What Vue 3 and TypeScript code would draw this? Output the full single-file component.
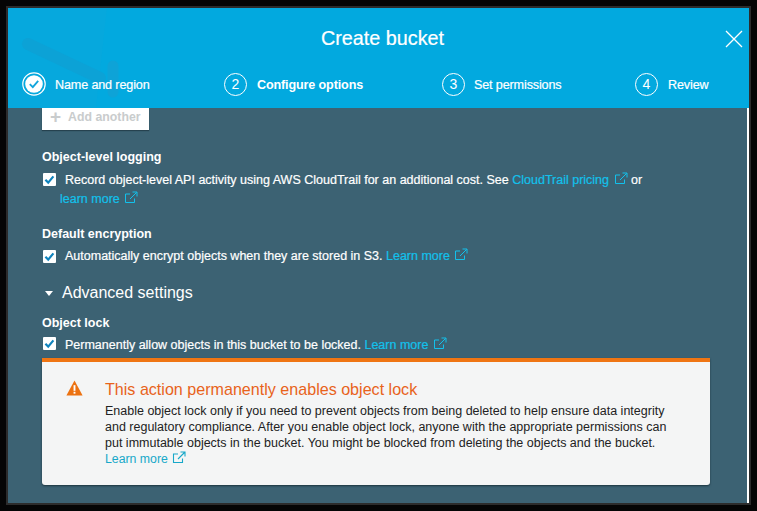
<script setup lang="ts">
const steps = [
  { n: '2', label: 'Configure options', cls: 'step-two', bold: true },
  { n: '3', label: 'Set permissions', cls: 'step-three', bold: false },
  { n: '4', label: 'Review', cls: 'step-four', bold: false },
]
</script>

<template>
  <div class="screen">
    <div class="modal">
      <header class="header">
        <svg class="watermark" width="130" height="100" viewBox="0 0 130 100" fill="none">
          <path d="M0 0H99L88 100H0Z" fill="#06a8dd" />
          <path d="M20 36L92 70" stroke="#0ca2d6" stroke-width="12" stroke-linecap="round" />
          <path d="M105 58V84" stroke="#0ea3d7" stroke-width="11" stroke-linecap="round" />
        </svg>
        <h1 class="title">Create bucket</h1>
        <svg class="close" width="20" height="20" viewBox="0 0 20 20" fill="none">
          <path d="M2 2L18 18M18 2L2 18" stroke="#fff" stroke-width="1.3" />
        </svg>
        <nav class="steps">
          <div class="step step-one">
            <span class="check-circle">
              <svg width="24" height="24" viewBox="0 0 24 24" fill="none">
                <circle cx="12" cy="12" r="11.2" stroke="#fff" stroke-width="1.2" />
                <circle cx="12" cy="12" r="8.8" fill="#fff" />
                <path d="M7.8 12.2L10.8 15.2L16.2 8.8" stroke="#12a5dc" stroke-width="1.8" />
              </svg>
            </span>
            <span class="step-label">Name and region</span>
          </div>
          <div v-for="s in steps" :key="s.n" class="step" :class="s.cls">
            <span class="step-num">{{ s.n }}</span>
            <span class="step-label" :class="{ bold: s.bold }">{{ s.label }}</span>
          </div>
        </nav>
      </header>

      <main class="content">
        <button class="add-btn" type="button"><span class="plus">+</span>Add another</button>

        <h2 class="label first">Object-level logging</h2>
        <div class="check-row">
          <span class="box"><svg width="13" height="13" viewBox="0 0 13 13" fill="none"><path d="M2.4 6.8L5.2 9.6L10.4 3.4" stroke="#0f83bd" stroke-width="2.2" /></svg></span>
          <p class="check-text">Record object-level API activity using AWS CloudTrail for an additional cost. See <a class="link">CloudTrail pricing <svg class="ext" width="14" height="13" viewBox="0 0 14 13" fill="none"><path d="M10.5 7.5V11.5H1.5V3H6M6 8L12.5 1.5M8.5 1H13V5.5" stroke="currentColor" stroke-width="1" /></svg></a> or <a class="link second-line">learn more <svg class="ext" width="14" height="13" viewBox="0 0 14 13" fill="none"><path d="M10.5 7.5V11.5H1.5V3H6M6 8L12.5 1.5M8.5 1H13V5.5" stroke="currentColor" stroke-width="1" /></svg></a></p>
        </div>

        <h2 class="label encryption">Default encryption</h2>
        <div class="check-row tight">
          <span class="box"><svg width="13" height="13" viewBox="0 0 13 13" fill="none"><path d="M2.4 6.8L5.2 9.6L10.4 3.4" stroke="#0f83bd" stroke-width="2.2" /></svg></span>
          <p class="check-text">Automatically encrypt objects when they are stored in S3. <a class="link">Learn more <svg class="ext" width="14" height="13" viewBox="0 0 14 13" fill="none"><path d="M10.5 7.5V11.5H1.5V3H6M6 8L12.5 1.5M8.5 1H13V5.5" stroke="currentColor" stroke-width="1" /></svg></a></p>
        </div>

        <div class="advanced"><span class="caret"></span>Advanced settings</div>

        <h2 class="label lock">Object lock</h2>
        <div class="check-row tight lock-row">
          <span class="box"><svg width="13" height="13" viewBox="0 0 13 13" fill="none"><path d="M2.4 6.8L5.2 9.6L10.4 3.4" stroke="#0f83bd" stroke-width="2.2" /></svg></span>
          <p class="check-text">Permanently allow objects in this bucket to be locked. <a class="link">Learn more <svg class="ext" width="14" height="13" viewBox="0 0 14 13" fill="none"><path d="M10.5 7.5V11.5H1.5V3H6M6 8L12.5 1.5M8.5 1H13V5.5" stroke="currentColor" stroke-width="1" /></svg></a></p>
        </div>

        <section class="alert">
          <svg class="warn" width="17" height="16" viewBox="0 0 18 17">
            <path d="M9 .5L17.6 16.4H.4Z" fill="#ec7211" />
            <rect x="8" y="5.5" width="2" height="6" fill="#fff" />
            <rect x="8" y="12.5" width="2" height="2" fill="#fff" />
          </svg>
          <div class="alert-body">
            <h3 class="alert-title">This action permanently enables object lock</h3>
            <p class="alert-text">Enable object lock only if you need to prevent objects from being deleted to help ensure data integrity and regulatory compliance. After you enable object lock, anyone with the appropriate permissions can put immutable objects in the bucket. You might be blocked from deleting the objects and the bucket.</p>
            <a class="alert-link">Learn more <svg class="ext" width="14" height="13" viewBox="0 0 14 13" fill="none"><path d="M10.5 7.5V11.5H1.5V3H6M6 8L12.5 1.5M8.5 1H13V5.5" stroke="currentColor" stroke-width="1.1" /></svg></a>
          </div>
        </section>
      </main>
    </div>
  </div>
</template>

<style>
html, body { margin: 0; background: #000; }
</style>

<style scoped>
.screen {
  width: 757px;
  height: 511px;
  box-sizing: border-box;
  padding: 8px;
  background: #050505;
  font-family: "Liberation Sans", Arial, sans-serif;
  overflow: hidden;
}
.modal {
  height: 495px;
  display: flex;
  flex-direction: column;
  overflow: hidden;
  background: #3c6273;
  box-shadow: 0 0 0 2px #2c2c2c;
}
.header {
  position: relative;
  height: 100px;
  flex: none;
  background: #02a9df;
  color: #fff;
  overflow: hidden;
}
.watermark { position: absolute; left: 0; top: 0; }
.title {
  position: relative;
  margin: 0;
  padding: 18px 0 0 8px;
  text-align: center;
  font-size: 19.8px;
  line-height: 24px;
  font-weight: 400;
  -webkit-text-stroke: .2px #fff;
}
.close { position: absolute; right: 5px; top: 21px; }
.steps {
  position: absolute;
  left: 14px;
  right: 0;
  top: 64px;
  display: flex;
  align-items: center;
}
.step { display: flex; align-items: center; font-size: 12.6px; }
.step-one { width: 202px; gap: 9px; }
.step-two { width: 218px; }
.step-three { width: 193px; }
.check-circle { display: flex; width: 24px; height: 24px; }
.step-num {
  box-sizing: border-box;
  width: 23px;
  height: 23px;
  margin-right: 10px;
  border: 1.2px solid #fff;
  border-radius: 50%;
  display: flex;
  align-items: center;
  justify-content: center;
  font-size: 14px;
}
.step-two .step-num { border-width: 1.5px; }
.step-three .step-label { margin-left: -1px; }
.step-label { padding-top: 2px; letter-spacing: -.14px; -webkit-text-stroke: .2px #fff; }
.bold { font-weight: 700; -webkit-text-stroke: 0; }
.content {
  flex: 1;
  position: relative;
  box-sizing: border-box;
  padding: 0 39px 0 34px;
  border-right: 2px solid #fff;
  color: #fff;
  font-size: 12.5px;
}
.add-btn {
  display: flex;
  align-items: center;
  width: 107px;
  height: 22px;
  padding: 0 0 4px 8px;
  border: 0;
  background: #fff;
  color: #c9cccd;
  font: 700 12.3px "Liberation Sans", Arial, sans-serif;
  box-shadow: 0 1px 1px #26424f;
}
.plus { margin-right: 7px; font-size: 19px; line-height: 16px; }
.label { margin: 0; font-size: 12.5px; line-height: 16px; font-weight: 700; }
.first { margin-top: 19px; }
.encryption { margin-top: 17px; }
.lock { margin-top: 12px; }
.check-row { display: flex; align-items: flex-start; margin-top: 6px; }
.tight { margin-top: 5px; }
.box {
  flex: none;
  width: 13px;
  height: 13px;
  margin: 2px 9px 0 1px;
  background: #fff;
  border-radius: 1px;
  display: flex;
}
.tight .box { margin-top: 3px; }
.lock-row .box { margin-top: 1px; }
.check-text { margin: 0; line-height: 19px; width: 610px; -webkit-text-stroke: .2px currentColor; }
.link { color: #12c1ec; white-space: nowrap; }
.second-line { display: block; margin-left: -5px; }
.ext { vertical-align: -1px; margin-left: 1px; }
.advanced {
  display: flex;
  align-items: center;
  margin-top: 17px;
  font-size: 16px;
  line-height: 20px;
}
.caret {
  width: 0;
  height: 0;
  margin: 1px 9px 0 3px;
  border: 4px solid transparent;
  border-top: 5px solid #fff;
  border-bottom: 0;
}
.alert {
  box-sizing: border-box;
  display: flex;
  width: 668px;
  height: 127px;
  margin-top: 3px;
  padding: 18px 35px 0 24px;
  background: #f4f5f5;
  border-top: 4px solid #ef7513;
  border-radius: 0 0 3px 3px;
  box-shadow: 0 1px 2px #1d343f;
  color: #222;
}
.warn { flex: none; margin: 0 22px 0 0; }
.alert-title {
  margin: 0 0 5px;
  color: #e8631b;
  font-size: 16.1px;
  line-height: 18px;
  font-weight: 400;
}
.alert-text { margin: 0; font-size: 12.5px; line-height: 16px; }
.alert-link { display: block; color: #17a8c9; font-size: 12.3px; line-height: 16px; }
</style>
